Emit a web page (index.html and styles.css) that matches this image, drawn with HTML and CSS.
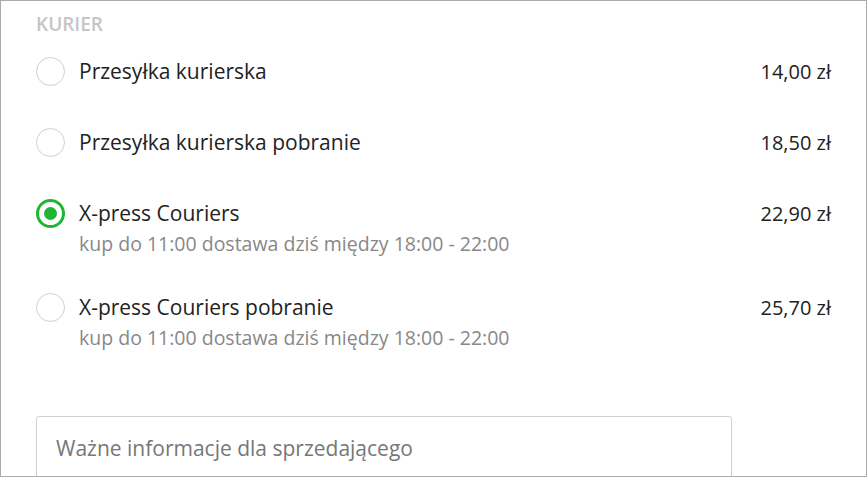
FILE: index.html
```html
<!DOCTYPE html>
<html>
<head>
    <meta charset="UTF-8">
    <title>Kurier</title>
    <link rel="stylesheet" href="styles.css">
</head>
<body>
<div class="frame">
    <h3 class="group-title">KURIER</h3>
    <ul class="options">
        <li class="option">
            <span class="radio"></span>
            <div class="label">
                <div class="name">Przesyłka kurierska</div>
            </div>
            <div class="price">14,00 zł</div>
        </li>
        <li class="option">
            <span class="radio"></span>
            <div class="label">
                <div class="name">Przesyłka kurierska pobranie</div>
            </div>
            <div class="price">18,50 zł</div>
        </li>
        <li class="option checked">
            <span class="radio"></span>
            <div class="label">
                <div class="name">X-press Couriers</div>
                <div class="note">kup do 11:00 dostawa dziś między 18:00 - 22:00</div>
            </div>
            <div class="price">22,90 zł</div>
        </li>
        <li class="option">
            <span class="radio"></span>
            <div class="label">
                <div class="name">X-press Couriers pobranie</div>
                <div class="note">kup do 11:00 dostawa dziś między 18:00 - 22:00</div>
            </div>
            <div class="price">25,70 zł</div>
        </li>
    </ul>
    <textarea class="message" placeholder="Ważne informacje dla sprzedającego"></textarea>
</div>
</body>
</html>
```

FILE: styles.css
```css
* {
    margin: 0;
    padding: 0;
    box-sizing: border-box;
    font-family: "Open Sans", "Noto Sans", sans-serif;
}

ul, li {
    list-style: none;
}

body {
    background: #fff;
}

.frame {
    width: 867px;
    height: 477px;
    border: 1px solid #aaa;
    padding: 0 35px 0 35px;
    overflow: hidden;
    background: #fff;
}

.group-title {
    padding-top: 10px;
    height: 35px;
    font-size: 19px;
    font-weight: 600;
    line-height: 26px;
    color: #c6c6c6;
}

.option {
    display: flex;
    align-items: flex-start;
    padding: 17px 0;
}

.radio {
    flex: none;
    width: 29px;
    height: 29px;
    margin-top: 4px;
    margin-right: 14px;
    border: 1px solid #cfcfcf;
    border-radius: 50%;
    display: flex;
    align-items: center;
    justify-content: center;
}

.option.checked .radio {
    border: 3px solid #21b534;
}

.option.checked .radio:after {
    content: "";
    width: 13px;
    height: 13px;
    border-radius: 50%;
    background: #21b534;
}

.label {
    flex: 1;
}

.name {
    font-size: 21px;
    line-height: 37px;
    color: #222;
}

.price {
    font-size: 20px;
    line-height: 37px;
    color: #222;
}

.note {
    font-size: 19.5px;
    line-height: 23px;
    color: #888;
}

.message {
    display: block;
    margin-top: 50px;
    width: 696px;
    height: 120px;
    padding: 16px 19px;
    border: 1px solid #d0d0d0;
    border-radius: 3px;
    font-size: 21px;
    line-height: 30px;
    resize: none;
    outline: none;
}

.message::placeholder {
    color: #777;
}
```
